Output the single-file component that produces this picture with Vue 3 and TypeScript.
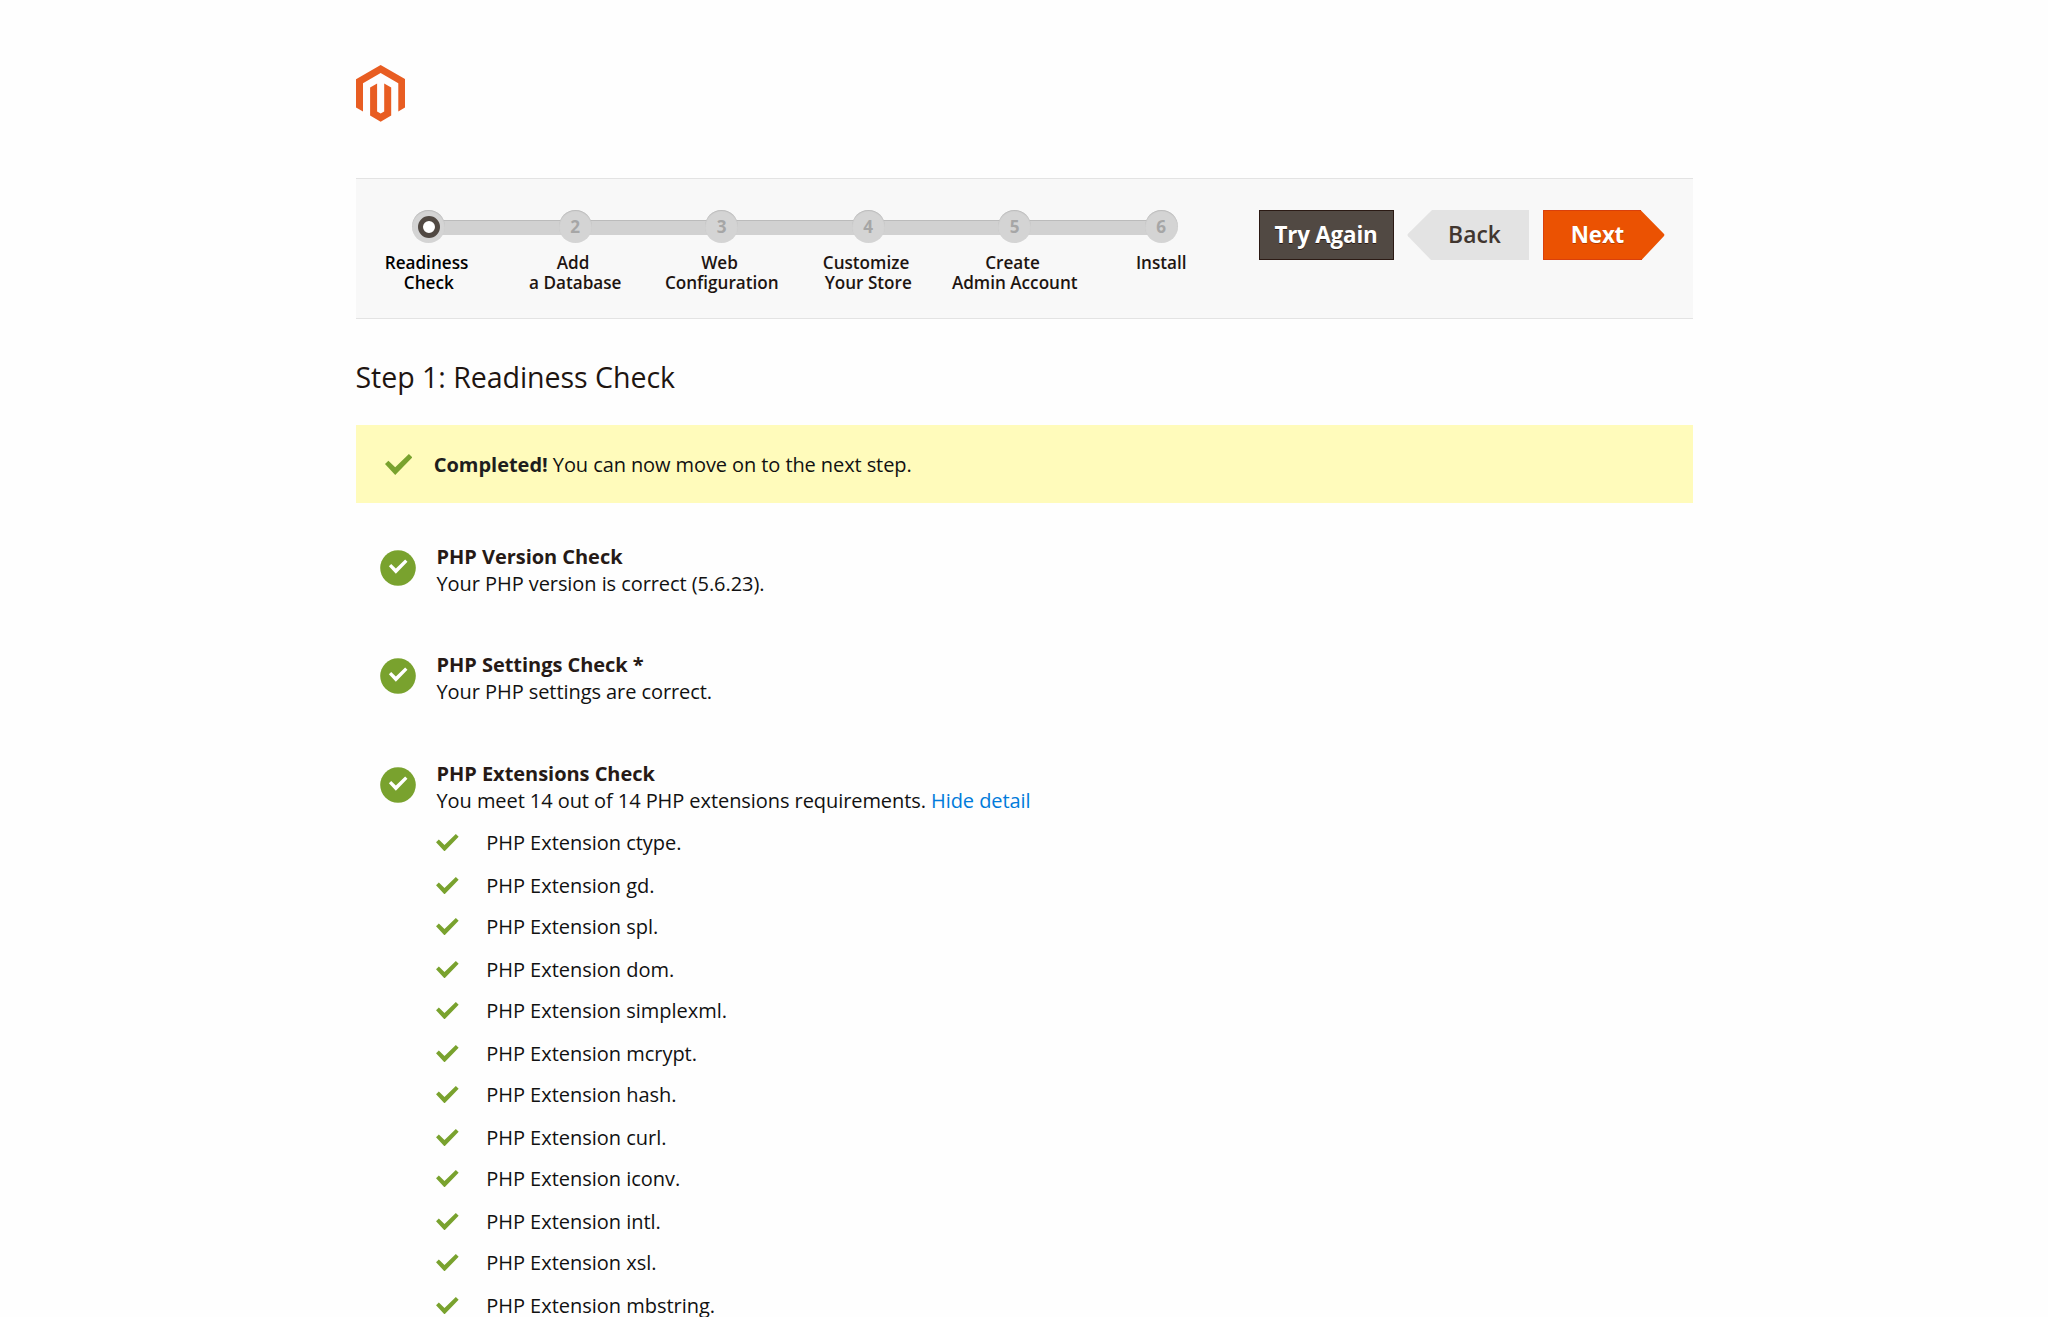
<script setup lang="ts">
interface Step {
  id: number
  lines: string[]
}

interface Check {
  title: string
  message: string
  link?: string
  items?: string[]
}

const steps: Step[] = [
  { id: 1, lines: ['Readiness ', 'Check'] },
  { id: 2, lines: ['Add ', 'a Database'] },
  { id: 3, lines: ['Web ', 'Configuration'] },
  { id: 4, lines: ['Customize ', 'Your Store'] },
  { id: 5, lines: ['Create ', 'Admin Account'] },
  { id: 6, lines: ['Install'] },
]

const extensions = [
  'ctype', 'gd', 'spl', 'dom', 'simplexml', 'mcrypt',
  'hash', 'curl', 'iconv', 'intl', 'xsl', 'mbstring',
]

const checks: Check[] = [
  { title: 'PHP Version Check', message: 'Your PHP version is correct (5.6.23).' },
  { title: 'PHP Settings Check *', message: 'Your PHP settings are correct.' },
  {
    title: 'PHP Extensions Check',
    message: 'You meet 14 out of 14 PHP extensions requirements.',
    link: 'Hide detail',
    items: extensions,
  },
]

const tick = '0,10.1 3.4,6.7 10.2,13.2 23.9,0 27.3,3.4 10.2,21'
</script>

<template>
  <main class="page">
    <svg class="logo" viewBox="0 0 49.3 56.7" aria-label="Magento">
      <path d="M24.65 0 49.3 14.2V42.4L42.3 46.4V18.3L24.65 8.1 7 18.3V46.4L0 42.4V14.2Z" />
      <path d="M14.1 22.5 21.1 18.4V46.5L24.65 48.6 28.2 46.5V18.4L35.2 22.5V50.6L24.65 56.7 14.1 50.6Z" />
    </svg>

    <nav class="bar">
      <ol class="steps">
        <li v-for="s in steps" :key="s.id" class="step">
          <span class="dot"><span v-if="s.id > 1">{{ s.id }}</span><i v-else class="ring" /></span>
          <span class="label"><span v-for="l in s.lines" :key="l" class="line">{{ l }}</span></span>
        </li>
      </ol>
      <div class="actions">
        <button class="btn dark">Try Again</button>
        <button class="btn back">
          <svg class="shape" viewBox="0 0 122 50"><path d="M122 0H25L1 23.8Q0 25 1 26.2L24 50H122Z" fill="#e3e3e3" /></svg>
          <span>Back</span>
        </button>
        <button class="btn next">
          <svg class="shape" viewBox="0 0 122 50">
            <path d="M0 0H97.5L120.8 23.8Q122 25 120.8 26.2L98.5 50H0Z" fill="#eb5202" />
            <path d="M98 .5H.5V49.5H99" fill="none" stroke="#d9400c" />
          </svg>
          <span>Next</span>
        </button>
      </div>
    </nav>

    <h1 class="title">Step 1: Readiness Check</h1>

    <div class="message">
      <svg class="tick-lg" viewBox="0 0 27.3 21"><polygon :points="tick" /></svg>
      <p><strong>Completed!</strong> You can now move on to the next step.</p>
    </div>

    <section v-for="c in checks" :key="c.title" class="check">
      <svg class="badge" viewBox="0 0 36 36">
        <circle cx="18" cy="18" r="17.8" fill="#79a22e" />
        <polygon :points="tick" transform="translate(8.9 9.4) scale(.68)" fill="#fff" />
      </svg>
      <div class="body">
        <h2>{{ c.title }}</h2>
        <p>{{ c.message }} <a v-if="c.link">{{ c.link }}</a></p>
        <ul v-if="c.items" class="list">
          <li v-for="e in c.items" :key="e">
            <svg class="tick-sm" viewBox="0 0 27.3 21"><polygon :points="tick" /></svg>
            <span>PHP Extension {{ e }}.</span>
          </li>
        </ul>
      </div>
    </section>
  </main>
</template>

<style>
body {
  background: #fefefe;
  overflow: hidden;
}
</style>

<style scoped>
.page {
  box-sizing: border-box;
  width: 1337px;
  height: 1317px;
  margin: 0 auto;
  padding-top: 65px;
  overflow: hidden;
  font: 20px/27px 'Open Sans', sans-serif;
  color: #111;
}
.logo {
  display: block;
  width: 49.3px;
  height: 56.7px;
  fill: #e85d22;
}
.bar {
  box-sizing: border-box;
  display: flex;
  height: 141px;
  margin-top: 56px;
  padding: 31.5px 28px 0 0;
  justify-content: space-between;
  background: #f8f8f8;
  border: solid #e3e3e3;
  border-width: 1px 0;
}
.steps {
  display: flex;
  margin: 0;
  padding: 0;
  list-style: none;
}
.step {
  display: flex;
  flex-direction: column;
  align-items: center;
  width: 146.5px;
  font-size: 17.14px;
  line-height: 20px;
  font-weight: 600;
  color: #1e1511;
  background: linear-gradient(#bbb, #bbb) 0 10px / 100% 1px no-repeat,
    linear-gradient(#d1d1d1, #d1d1d1) 0 11px / 100% 14px no-repeat;
}
.step:first-child {
  color: #000;
  background-position: 73px 10px, 73px 11px;
}
.step:last-child {
  background-size: 73px 1px, 73px 14px;
}
.dot {
  display: flex;
  align-items: center;
  justify-content: center;
  width: 33px;
  height: 33px;
  border-radius: 50%;
  background: #d4d4d4;
  box-shadow: inset 0 1px 1px #bbb;
  color: #a6a6a6;
  font-weight: 700;
}
.ring {
  box-sizing: border-box;
  width: 22px;
  height: 22px;
  border: 5.5px solid #514943;
  border-radius: 50%;
  background: #fff;
}
.label {
  margin-top: 9.5px;
}
.line {
  display: block;
  white-space: pre;
  text-align: center;
}
.actions {
  display: flex;
}
.btn {
  position: relative;
  width: 122px;
  height: 50px;
  padding: 0;
  border: 0;
  background: none;
  font: 600 22.86px/50px 'Open Sans', sans-serif;
  color: #fff;
}
.btn span {
  position: relative;
}
.shape {
  position: absolute;
  inset: 0;
  width: 122px;
  height: 50px;
}
.dark,
.next {
  font-size: 22.4px;
  font-weight: 700;
  letter-spacing: -0.2px;
}
.dark {
  width: 135px;
  background: #514943;
  box-shadow: inset 0 0 0 1px #2b1a14;
  text-shadow: 0 1px 0 #2b1a14;
}
.back {
  margin-left: 13px;
  padding-left: 14px;
  color: #41362f;
}
.next {
  margin-left: 14px;
  padding-right: 12px;
  text-shadow: 0 1px 0 #b33b00;
}
.title {
  margin: 38px 0 29px;
  font-size: 28.57px;
  line-height: 39px;
  font-weight: 400;
  letter-spacing: -0.05px;
  color: #1e1511;
}
.message {
  box-sizing: border-box;
  display: flex;
  align-items: center;
  height: 78px;
  padding: 2px 0 0 29px;
  background: #fffbbb;
}
.message p {
  margin: 0 0 0 22px;
  letter-spacing: -0.09px;
}
.message strong {
  color: #1e1e1e;
  letter-spacing: -0.03px;
}
.tick-lg,
.tick-sm {
  flex: none;
  fill: #79a22e;
}
.tick-lg {
  width: 27.3px;
  height: 21px;
}
.check {
  display: flex;
  height: 108.2px;
  padding-left: 24px;
}
.message + .check {
  margin-top: 40.5px;
}
.badge {
  flex: none;
  width: 36px;
  height: 36px;
  margin-top: 7px;
}
.body {
  margin-left: 21px;
}
h2,
.body p {
  margin: 0;
  font-size: 20px;
  white-space: nowrap;
}
h2 {
  color: #261a16;
  letter-spacing: -0.04px;
}
.body p {
  letter-spacing: -0.07px;
}
a {
  color: #007bdb;
}
.list {
  margin: 7px 0 0;
  padding: 0;
  list-style: none;
}
.list li {
  box-sizing: border-box;
  display: flex;
  align-items: flex-start;
  height: 43px;
  padding-top: 8px;
  letter-spacing: -0.02px;
}
.list li:nth-child(even) {
  height: 41px;
}
.tick-sm {
  width: 22.7px;
  height: 17.4px;
  margin: 5.5px 0 0 -0.5px;
}
.list span {
  margin-left: 27.5px;
}
</style>
